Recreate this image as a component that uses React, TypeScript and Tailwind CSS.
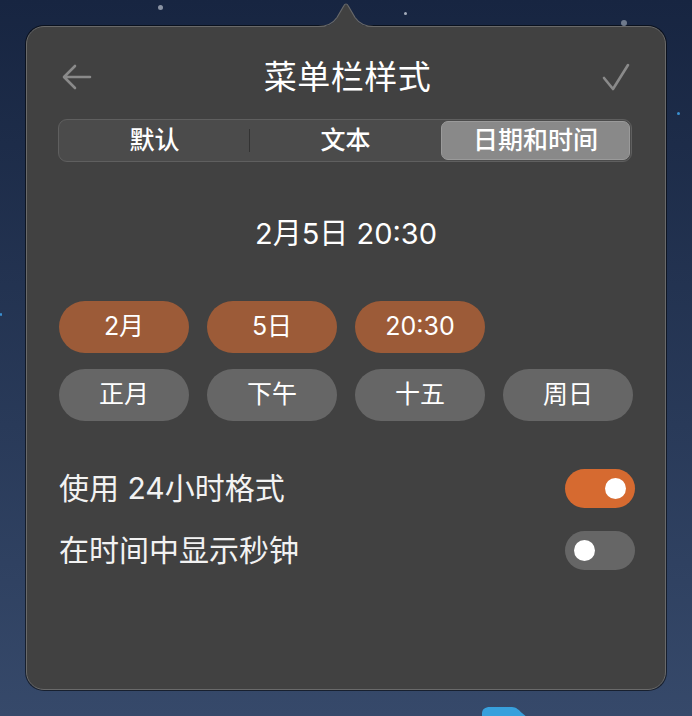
import React from "react";

const font = { fontFamily: 'Inter, "Noto Sans CJK SC", "Noto Sans", sans-serif' };

function Chip({ label, active }: { label: string; active?: boolean }) {
  return (
    <div
      className={
        "w-[130px] h-[52px] rounded-full flex items-center justify-center text-[25px] text-white " +
        (active ? "bg-[#9c5b38]" : "bg-[#666666]")
      }
    >
      {label}
    </div>
  );
}

function Toggle({ on }: { on?: boolean }) {
  return (
    <div
      className={
        "w-[70px] h-[39px] rounded-full flex items-center px-[9px] " +
        (on ? "bg-[#d66a30] justify-end" : "bg-[#666666] justify-start")
      }
    >
      <div className="w-[21px] h-[21px] rounded-full bg-white" />
    </div>
  );
}

export default function App() {
  return (
    <div
      className="relative w-[692px] h-[716px] overflow-hidden bg-gradient-to-b from-[#172541] to-[#36496a]"
      style={font}
    >
      {/* stars */}
      <div className="absolute left-[158px] top-[5px] w-[5px] h-[5px] rounded-full bg-[#8a93a3]" />
      <div className="absolute left-[404px] top-[12px] w-[3px] h-[3px] rounded-full bg-[#a5adbb]" />
      <div className="absolute left-[621px] top-[20px] w-[6px] h-[6px] rounded-full bg-[#6f7a8c]" />
      <div className="absolute left-[677px] top-[112px] w-[3px] h-[3px] rounded-full bg-[#3a8fd0]" />
      <div className="absolute left-[0px] top-[313px] w-[2px] h-[3px] rounded-full bg-[#3a8fd0]" />
      {/* blue item at bottom */}
      <svg className="absolute left-[482px] top-[706px]" width="50" height="12" viewBox="0 0 50 12">
        <path d="M0 12 L0 8 C0 3 3 1 8 1 L30 1 C34 1 37 4 40 7 L46 12 Z" fill="#38a0dc" />
      </svg>

      {/* panel */}
      <div className="ml-[26px] mt-[26px] w-[640px] h-[664px] rounded-[18px] bg-[#414141] border border-[#696969] shadow-[0_0_0_1px_rgba(0,0,0,0.55)] px-[31px] pt-[27px] flex flex-col">
        {/* header */}
        <div className="h-[46px] flex items-center justify-between">
          <svg width="30" height="30" viewBox="0 0 30 30" className="ml-[4px]">
            <path d="M28 15 H3 M13 4 L2 15 L13 26" stroke="#8a8a8a" strokeWidth="2.6" fill="none" strokeLinecap="round" strokeLinejoin="round" />
          </svg>
          <div className="text-[33px] text-white leading-none tracking-[0.5px] ml-[4px]">菜单栏样式</div>
          <svg width="32" height="30" viewBox="0 0 32 30" className="mr-[3px]">
            <path d="M5 16 L14 27 L29 3" stroke="#8a8a8a" strokeWidth="2.6" fill="none" strokeLinecap="round" strokeLinejoin="round" />
          </svg>
        </div>

        {/* segmented control */}
        <div className="mt-[19px] w-[574px] h-[43px] rounded-[9px] bg-[#4b4b4b] border border-[#5f5f5f] flex items-center p-[1px]">
          <div className="w-[189px] h-full flex items-center justify-center text-[25px] font-medium text-white">默认</div>
          <div className="w-[1px] h-[23px] bg-[#333333]" />
          <div className="flex-1 h-full flex items-center justify-center text-[25px] font-medium text-white">文本</div>
          <div className="w-[189px] h-full flex items-center justify-center text-[25px] font-medium text-white bg-[#898989] rounded-[7px] border border-[#9a9a9a]">
            日期和时间
          </div>
        </div>

        {/* date preview */}
        <div className="mt-[52px] h-[40px] flex items-center justify-center text-[29px] text-white">
          2月5日 20:30
        </div>

        {/* chips */}
        <div className="mt-[47px] flex flex-col gap-[16px] pl-[1px]">
          <div className="flex gap-[18px]">
            <Chip label="2月" active />
            <Chip label="5日" active />
            <Chip label="20:30" active />
          </div>
          <div className="flex gap-[18px]">
            <Chip label="正月" />
            <Chip label="下午" />
            <Chip label="十五" />
            <Chip label="周日" />
          </div>
        </div>

        {/* toggles */}
        <div className="mt-[48px] flex flex-col gap-[23px] pl-[1px] w-[577px]">
          <div className="flex items-center justify-between h-[39px]">
            <div className="text-[30px] text-[#f2f2f2]">使用 24小时格式</div>
            <Toggle on />
          </div>
          <div className="flex items-center justify-between h-[39px]">
            <div className="text-[30px] text-[#f2f2f2]">在时间中显示秒钟</div>
            <Toggle />
          </div>
        </div>
      </div>

      {/* pointer */}
      <svg className="absolute left-[318px] top-[1px]" width="56" height="27" viewBox="0 0 56 27">
        <path d="M0 26 C10 26 15 23 19 17 L26 5 C27 3 29 3 30 5 L37 17 C41 23 46 26 56 26 L56 27 L0 27 Z" fill="#414141" />
        <path d="M0 25.5 C10 25.5 15 22.5 19 16.5 L26 4.5 C27 2.5 29 2.5 30 4.5 L37 16.5 C41 22.5 46 25.5 56 25.5" fill="none" stroke="#696969" strokeWidth="1.2" />
      </svg>
    </div>
  );
}
